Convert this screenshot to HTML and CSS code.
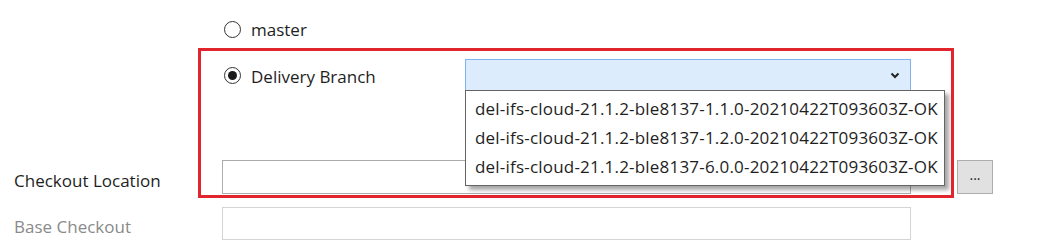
FILE: index.html
```html
<!DOCTYPE html>
<html lang="en">
<head>
  <meta charset="UTF-8">
  <title>Checkout Settings</title>
  <link rel="stylesheet" href="styles.css">
</head>
<body>
  <div class="page">
    <div class="form">
      <div class="row row-master">
        <div></div>
        <label class="radio">
          <span class="dot"></span>
          <span class="text">master</span>
        </label>
      </div>

      <div class="row row-branch">
        <div></div>
        <div class="branch">
          <label class="radio">
            <span class="dot checked"></span>
            <span class="text">Delivery Branch</span>
          </label>
          <div class="combo">
            <div class="combo-box">
              <svg class="chevron" width="10" height="7" viewBox="0 0 10 7">
                <polyline points="1.5,1.5 5,5 8.5,1.5" fill="none" stroke="#222" stroke-width="2"/>
              </svg>
            </div>
            <ul class="combo-list">
              <li>del-ifs-cloud-21.1.2-ble8137-1.1.0-20210422T093603Z-OK</li>
              <li>del-ifs-cloud-21.1.2-ble8137-1.2.0-20210422T093603Z-OK</li>
              <li>del-ifs-cloud-21.1.2-ble8137-6.0.0-20210422T093603Z-OK</li>
            </ul>
          </div>
        </div>
      </div>

      <div class="row row-location">
        <span class="label">Checkout Location</span>
        <div class="field"></div>
        <button class="browse">...</button>
      </div>

      <div class="row row-base">
        <span class="label muted">Base Checkout</span>
        <div class="field disabled"></div>
      </div>
    </div>

    <!-- highlight box drawn over the screenshot -->
    <div class="highlight"></div>
  </div>
</body>
</html>
```

FILE: styles.css
```css
body {
  margin: 0;
  background: #fff;
  font-family: "Open Sans", "Noto Sans", Arial, sans-serif;
  font-size: 17px;
  color: #1e1e1e;
}
.page {
  position: relative;
  width: 1041px;
  height: 249px;
  overflow: hidden;
}
.form {
  padding: 14px 0 0 14px;
}
.row {
  display: grid;
  grid-template-columns: 208px 689px 46px 36px;
  align-items: center;
}
.row-master {
  height: 30px;
}
.row-branch {
  margin-top: 15px;
  height: 32px;
}
.row-location {
  margin-top: 69px;
  height: 34px;
}
.row-base {
  margin-top: 13px;
  height: 33px;
}
.radio {
  display: flex;
  align-items: center;
  gap: 10px;
  padding-left: 2px;
  width: 230px;
}
.row-branch .radio .text {
  padding-top: 2px;
}
.dot {
  width: 15px;
  height: 15px;
  border: 1px solid #333;
  border-radius: 50%;
  display: flex;
  align-items: center;
  justify-content: center;
  background: #fff;
}
.dot.checked::after {
  content: "";
  width: 9px;
  height: 9px;
  border-radius: 50%;
  background: #1a1a1a;
}
.branch {
  display: flex;
  align-items: center;
  height: 32px;
}
.branch .radio {
  width: 241px;
}
.combo {
  position: relative;
  width: 446px;
  height: 32px;
}
.combo-box {
  height: 30px;
  border: 1px solid #7eb4ea;
  background: #dcecfc;
  display: flex;
  align-items: center;
  justify-content: flex-end;
  padding-right: 10px;
}
.combo-list {
  position: absolute;
  top: 31px;
  left: 0;
  width: 478px;
  margin: 0;
  padding: 3px 0 4px;
  list-style: none;
  background: #fff;
  border: 1px solid #646464;
  box-shadow: 4px 4px 4px rgba(0, 0, 0, 0.35);
  z-index: 2;
}
.combo-list li {
  height: 29px;
  line-height: 29px;
  padding-left: 9px;
  letter-spacing: 0.2px;
  white-space: nowrap;
}
.label {
  padding-top: 6px;
}
.muted {
  color: #8a8a8a;
}
.field {
  height: 32px;
  border: 1px solid #acacac;
  background: #fff;
}
.field.disabled {
  height: 31px;
  border-color: #d4d4d4;
}
.browse {
  grid-column: 4;
  width: 36px;
  height: 34px;
  padding: 0 0 6px;
  border: 1px solid #adadad;
  background: #e1e1e1;
  font-family: inherit;
  font-size: 14px;
  color: #1e1e1e;
}
.highlight {
  position: absolute;
  left: 198px;
  top: 48px;
  width: 750px;
  height: 144px;
  border: 3px solid #e2242c;
  pointer-events: none;
  z-index: 3;
}
```
